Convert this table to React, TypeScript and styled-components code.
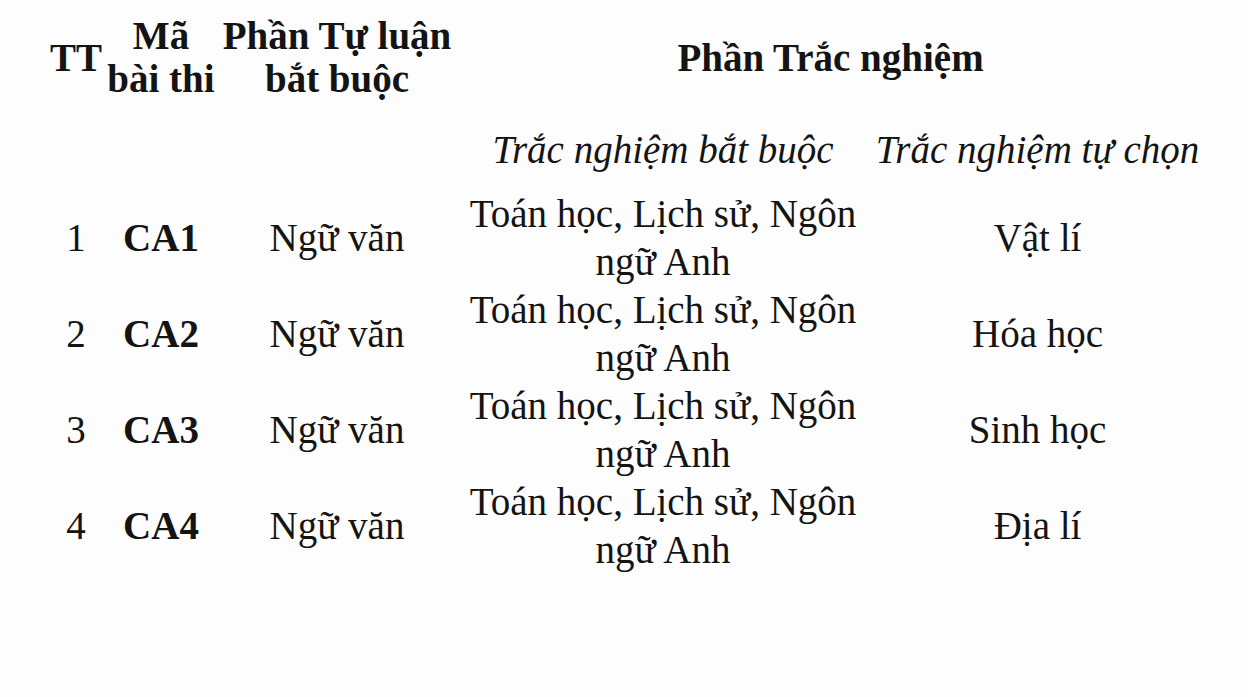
import React from 'react';
import styled, { createGlobalStyle } from 'styled-components';

const GlobalStyle = createGlobalStyle`
  html, body {
    margin: 0;
    padding: 0;
    background: #fdfdfd;
  }
  body {
    font-family: "Liberation Serif", "Times New Roman", serif;
    color: #141414;
  }
`;

const Page = styled.div`
  width: 1248px;
  height: 697px;
  overflow: hidden;
  padding-left: 48px;
  box-sizing: border-box;
`;

const Table = styled.table`
  border-collapse: collapse;
  table-layout: fixed;
  font-size: 39px;
`;

const HeadCell = styled.th`
  padding: 14px 0 0;
  line-height: 43px;
  font-weight: 700;
  text-align: center;
  vertical-align: middle;
`;

const SubHeadCell = styled.th`
  padding: 28px 0 18px;
  line-height: 44px;
  font-weight: 400;
  font-style: italic;
  text-align: center;
  vertical-align: middle;
`;

const Cell = styled.td<{ $bold?: boolean }>`
  padding: 0;
  line-height: 48px;
  height: 96px;
  text-align: center;
  vertical-align: middle;
  font-weight: ${({ $bold }) => ($bold ? 700 : 400)};
`;

const rows = [
  { tt: 1, code: 'CA1', elective: 'Vật lí' },
  { tt: 2, code: 'CA2', elective: 'Hóa học' },
  { tt: 3, code: 'CA3', elective: 'Sinh học' },
  { tt: 4, code: 'CA4', elective: 'Địa lí' },
];

const App: React.FC = () => {
  return (
    <Page>
      <GlobalStyle />
      <Table>
        <colgroup>
          <col style={{ width: 56 }} />
          <col style={{ width: 114 }} />
          <col style={{ width: 238 }} />
          <col style={{ width: 414 }} />
          <col style={{ width: 335 }} />
        </colgroup>
        <thead>
          <tr>
            <HeadCell>TT</HeadCell>
            <HeadCell>
              Mã
              <br />
              bài thi
            </HeadCell>
            <HeadCell>
              Phần Tự luận
              <br />
              bắt buộc
            </HeadCell>
            <HeadCell colSpan={2}>Phần Trắc nghiệm</HeadCell>
          </tr>
          <tr>
            <SubHeadCell />
            <SubHeadCell />
            <SubHeadCell />
            <SubHeadCell>Trắc nghiệm bắt buộc</SubHeadCell>
            <SubHeadCell>Trắc nghiệm tự chọn</SubHeadCell>
          </tr>
        </thead>
        <tbody>
          {rows.map((row) => (
            <tr key={row.tt}>
              <Cell>{row.tt}</Cell>
              <Cell $bold>{row.code}</Cell>
              <Cell>Ngữ văn</Cell>
              <Cell>
                Toán học, Lịch sử, Ngôn
                <br />
                ngữ Anh
              </Cell>
              <Cell>{row.elective}</Cell>
            </tr>
          ))}
        </tbody>
      </Table>
    </Page>
  );
};

export default App;
